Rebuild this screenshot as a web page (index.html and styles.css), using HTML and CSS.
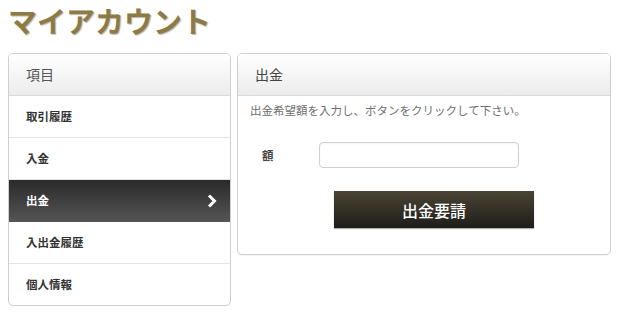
FILE: index.html
```html
<!DOCTYPE html>
<html lang="ja">
<head>
<meta charset="utf-8">
<link rel="stylesheet" href="styles.css">
</head>
<body>
<div class="page">
  <h1 class="title">マイアカウント</h1>
  <div class="columns">
    <div class="panel side">
      <div class="panel-head">項目</div>
      <ul class="menu">
        <li class="menu-item">取引履歴</li>
        <li class="menu-item">入金</li>
        <li class="menu-item active">出金
          <svg class="chev" width="10" height="14" viewBox="0 0 10 14"><polyline points="2,1.5 7.5,7 2,12.5" fill="none" stroke="#fff" stroke-width="3"/></svg>
        </li>
        <li class="menu-item">入出金履歴</li>
        <li class="menu-item last">個人情報</li>
      </ul>
    </div>
    <div class="panel main">
      <div class="panel-head main-head">出金</div>
      <div class="panel-body">
        <p class="desc">出金希望額を入力し、ボタンをクリックして下さい。</p>
        <div class="field">
          <label class="label">額</label>
          <input class="input" type="text">
        </div>
        <div class="actions">
          <button class="btn">出金要請</button>
        </div>
      </div>
    </div>
  </div>
</div>
</body>
</html>
```

FILE: styles.css
```css
* { box-sizing: border-box; }
body {
  margin: 0;
  background: #fff;
  font-family: "Noto Sans CJK JP", "Noto Sans", sans-serif;
  color: #333;
}
.page { padding: 0 8px; width: 620px; }
.title {
  margin: 0 0 13px;
  font-size: 29px;
  line-height: 40px;
  height: 40px;
  font-weight: bold;
  color: #8c7b45;
  text-shadow: 1px 1px 1px rgba(60, 50, 20, 0.35);
  letter-spacing: 0;
}
.columns {
  display: flex;
  gap: 6px;
  align-items: flex-start;
}
.panel {
  border: 1px solid #cfcfcf;
  border-radius: 5px;
  background: #fff;
  overflow: hidden;
  box-shadow: 0 1px 1px rgba(0,0,0,0.05);
}
.side { width: 223px; }
.main { width: 374px; }
.panel-head {
  height: 42px;
  line-height: 41px;
  padding-left: 17px;
  font-size: 14px;
  color: #555;
  background: linear-gradient(#ffffff, #ececec);
  border-bottom: 1px solid #dadada;
}
.main-head { padding-left: 17px; color: #444; }
.menu { list-style: none; margin: 0; padding: 0; }
.menu-item {
  position: relative;
  height: 42px;
  line-height: 41px;
  padding-left: 17px;
  font-size: 11.5px;
  font-weight: bold;
  color: #333;
  border-bottom: 1px solid #e4e4e4;
}
.menu-item.last { border-bottom: none; height: 41px; }
.menu-item.active {
  color: #fff;
  background: linear-gradient(#2a2a2a, #545454);
  border-bottom-color: #555;
}
.chev { position: absolute; right: 13px; top: 14px; }
.panel-body { padding: 6px 12px 26px 12px; }
.desc {
  margin: 0;
  font-size: 11.5px;
  line-height: 16px;
  color: #707070;
}
.field {
  display: flex;
  align-items: center;
  margin-top: 24px;
  padding-left: 12px;
}
.label {
  width: 57px;
  font-size: 11.5px;
  font-weight: bold;
  color: #444;
}
.input {
  width: 200px;
  height: 26px;
  border: 1px solid #d0d0d0;
  border-radius: 4px;
  box-shadow: inset 0 1px 2px rgba(0,0,0,0.05);
  outline: none;
}
.actions {
  display: flex;
  padding-left: 84px;
  margin-top: 23px;
}
.btn {
  width: 200px;
  height: 37px;
  border: none;
  border-radius: 0;
  background: linear-gradient(#4a4434, #1d1d1a);
  color: #fff;
  font-family: "Noto Sans CJK JP", sans-serif;
  font-size: 16px;
  font-weight: 500;
  box-shadow: 0 1px 1px rgba(0,0,0,0.3);
  padding: 0;
}
```
